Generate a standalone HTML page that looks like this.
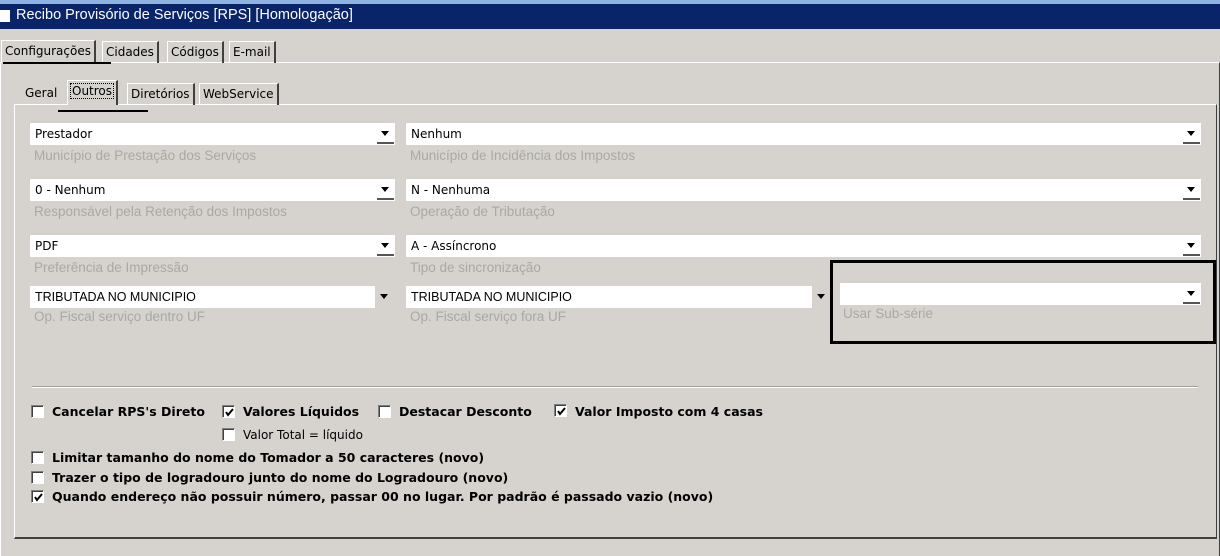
<!DOCTYPE html>
<html><head><meta charset="utf-8"><style>
*{margin:0;padding:0;box-sizing:border-box}
body{width:1220px;height:556px;background:#d6d3ce;font-family:"DejaVu Sans",Tahoma,sans-serif;font-size:12px;color:#000;position:relative;overflow:hidden}
.a{position:absolute}
.title{left:0;top:0;width:1220px;height:29px;background:#0a246a;border-top:4px solid #8fb3e0}
.title span{position:absolute;left:16px;top:3px;color:#fff;font-size:14.5px;white-space:nowrap;font-family:"Liberation Sans",sans-serif}
.title i{position:absolute;left:0;top:6px;width:10px;height:12px;background:#fff}
.tab{position:absolute;height:22px;border:1px solid #fff;border-right:2px solid #404040;border-bottom:none;padding:3px 3px;font-size:12px;white-space:nowrap}
.panel{position:absolute;border:1px solid #fff;border-right-color:#404040;border-bottom:2px solid #404040}
.cb{position:absolute;height:22px;background:#fff;font-size:12px;padding:4px 5px;white-space:nowrap}
.btn{position:absolute;right:1px;top:0;width:17px;height:21px;background:#fff;border-bottom:2px solid #555}
.btn:after{content:"";position:absolute;left:4px;top:8px;border-left:4px solid transparent;border-right:4px solid transparent;border-top:5px solid #000}
.btn.g{background:#d6d3ce;border-bottom:none;right:-18px}
.lbl{position:absolute;color:#aaa8a4;font-size:13.5px;white-space:nowrap;font-family:"Liberation Sans",sans-serif}
.chk{position:absolute;width:13px;height:13px;background:#fff;border:1px solid #808080;border-right-color:#fff;border-bottom-color:#fff;box-shadow:inset 1px 1px 0 #404040}
.chk svg{position:absolute;left:2px;top:2px}
.t{position:absolute;font-weight:bold;font-size:12.5px;white-space:nowrap}
.up{font-family:"Liberation Sans",sans-serif;font-size:12.5px}
</style></head><body>
<div class="a title"><i></i><span>Recibo Provisório de Serviços [RPS] [Homologação]</span></div>

<div class="panel" style="left:0;top:62px;width:1220px;height:494px;border-bottom:none"></div>
<div class="tab" style="left:1px;top:40px;height:23px;background:#d6d3ce;border-bottom:none">Configurações</div>
<div class="tab" style="left:102px;top:41px">Cidades</div>
<div class="tab" style="left:167px;top:41px">Códigos</div>
<div class="tab" style="left:229px;top:41px">E-mail</div>
<div class="a" style="left:3px;top:62px;width:108px;height:2px;background:#000"></div>

<div class="panel" style="left:14px;top:104px;width:1203px;height:435px"></div>
<div class="a" style="left:15px;top:104px;width:1200px;height:1px;background:#fff"></div>
<div class="tab" style="left:22px;top:83px;border:none">Geral</div>
<div class="tab" style="left:67px;top:80px;height:25px;background:#d6d3ce"><span style="outline:1px dotted #000;padding:0 1px">Outros</span></div>
<div class="tab" style="left:127px;top:83px">Diretórios</div>
<div class="tab" style="left:199px;top:83px">WebService</div>
<div class="a" style="left:58px;top:110px;width:90px;height:2px;background:#000"></div>

<div class="cb" style="left:30px;top:123px;width:365px">Prestador<div class="btn"></div></div>
<div class="lbl" style="left:34px;top:148px">Município de Prestação dos Serviços</div>
<div class="cb" style="left:406px;top:123px;width:795px">Nenhum<div class="btn"></div></div>
<div class="lbl" style="left:410px;top:148px">Município de Incidência dos Impostos</div>

<div class="cb" style="left:30px;top:179px;width:365px">0 - Nenhum<div class="btn"></div></div>
<div class="lbl" style="left:34px;top:204px">Responsável pela Retenção dos Impostos</div>
<div class="cb" style="left:406px;top:179px;width:795px">N - Nenhuma<div class="btn"></div></div>
<div class="lbl" style="left:410px;top:204px">Operação de Tributação</div>

<div class="cb" style="left:30px;top:235px;width:365px">PDF<div class="btn"></div></div>
<div class="lbl" style="left:34px;top:260px">Preferência de Impressão</div>
<div class="cb" style="left:406px;top:235px;width:795px">A - Assíncrono<div class="btn"></div></div>
<div class="lbl" style="left:410px;top:260px">Tipo de sincronização</div>

<div class="cb up" style="left:30px;top:286px;width:345px">TRIBUTADA NO MUNICIPIO<div class="btn g"></div></div>
<div class="lbl" style="left:34px;top:309px">Op. Fiscal serviço dentro UF</div>
<div class="cb up" style="left:406px;top:286px;width:406px">TRIBUTADA NO MUNICIPIO<div class="btn g"></div></div>
<div class="lbl" style="left:410px;top:309px">Op. Fiscal serviço fora UF</div>
<div class="cb" style="left:840px;top:283px;width:361px"><div class="btn"></div></div>
<div class="lbl" style="left:843px;top:306px">Usar Sub-série</div>
<div class="a" style="left:830px;top:260px;width:386px;height:84px;border:3px solid #000"></div>

<div class="a" style="left:32px;top:386px;width:1166px;height:2px;border-top:1px solid #a0a0a0;border-bottom:1px solid #fff"></div>

<div class="chk" style="left:31px;top:405px"></div><div class="t" style="left:52px;top:404px">Cancelar RPS's Direto</div>
<div class="chk" style="left:222px;top:405px"><svg width="9" height="9"><path d="M1 4 L3 7 L8 1" stroke="#000" stroke-width="2" fill="none"/></svg></div><div class="t" style="left:243px;top:404px">Valores Líquidos</div>
<div class="chk" style="left:378px;top:405px"></div><div class="t" style="left:399px;top:404px">Destacar Desconto</div>
<div class="chk" style="left:554px;top:404px"><svg width="9" height="9"><path d="M1 4 L3 7 L8 1" stroke="#000" stroke-width="2" fill="none"/></svg></div><div class="t" style="left:575px;top:404px">Valor Imposto com 4 casas</div>
<div class="chk" style="left:222px;top:428px"></div><div class="t" style="left:243px;top:428px;font-weight:normal;font-size:12px">Valor Total = líquido</div>
<div class="chk" style="left:31px;top:451px"></div><div class="t" style="left:52px;top:450px">Limitar tamanho do nome do Tomador a 50 caracteres (novo)</div>
<div class="chk" style="left:31px;top:471px"></div><div class="t" style="left:52px;top:470px">Trazer o tipo de logradouro junto do nome do Logradouro (novo)</div>
<div class="chk" style="left:31px;top:490px"><svg width="9" height="9"><path d="M1 4 L3 7 L8 1" stroke="#000" stroke-width="2" fill="none"/></svg></div><div class="t" style="left:52px;top:489px">Quando endereço não possuir número, passar 00 no lugar. Por padrão é passado vazio (novo)</div>
</body></html>
